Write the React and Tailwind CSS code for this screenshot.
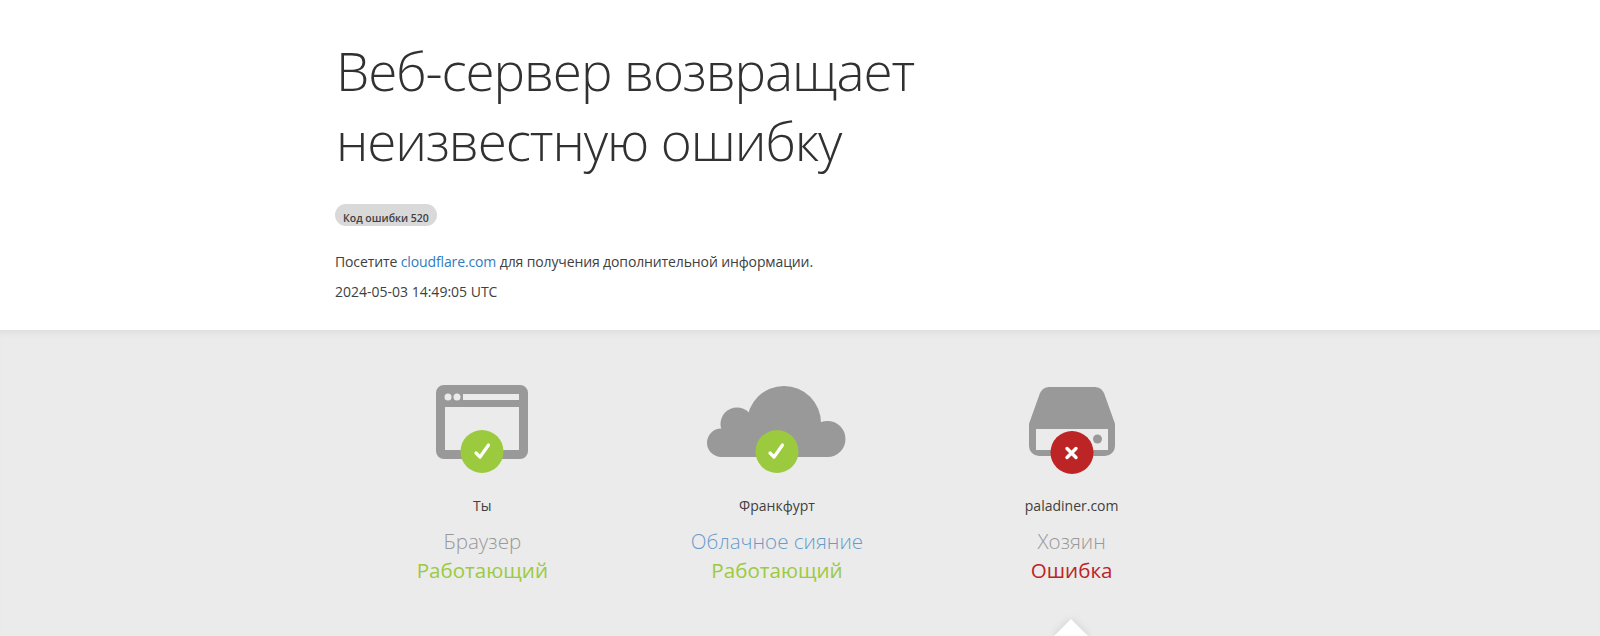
const font = { fontFamily: '"Open Sans", "Noto Sans", sans-serif' };

function Badge({ ok }) {
  return (
    <div className={`absolute bottom-0 left-1/2 -translate-x-1/2 w-[43px] h-[43px] rounded-full flex items-center justify-center ${ok ? "bg-[#9bca3e]" : "bg-[#bd2426]"}`}>
      {ok ? (
        <svg width="20" height="20" viewBox="0 0 20 20" fill="none" stroke="#fff" strokeWidth="3.2" strokeLinecap="round" strokeLinejoin="round">
          <path d="M3.5 11l4 4L16 3" />
        </svg>
      ) : (
        <svg width="14" height="14" viewBox="0 0 14 14" fill="none" stroke="#fff" strokeWidth="3.4" strokeLinecap="round">
          <path d="M2.5 2.5l9 9M11.5 2.5l-9 9" />
        </svg>
      )}
    </div>
  );
}

function BrowserIcon() {
  return (
    <svg width="92" height="74" viewBox="0 0 92 74">
      <path fillRule="evenodd" fill="#999" d="M8 0h76a8 8 0 0 1 8 8v58a8 8 0 0 1-8 8H8a8 8 0 0 1-8-8V8a8 8 0 0 1 8-8zM9 22v43h74V22z" />
      <circle cx="12" cy="12" r="3.5" fill="#ebebeb" />
      <circle cx="21" cy="12" r="3.5" fill="#ebebeb" />
      <rect x="27" y="9" width="56" height="6" fill="#ebebeb" />
    </svg>
  );
}

function CloudIcon() {
  return (
    <svg width="139" height="71" viewBox="0 0 139 71" fill="#999">
      <circle cx="77" cy="37" r="37" />
      <circle cx="30" cy="38" r="16.500" />
      <circle cx="14.200" cy="56.800" r="14.200" />
      <circle cx="120.500" cy="53" r="18" />
      <rect x="14" y="45" width="106" height="26" />
    </svg>
  );
}

function ServerIcon() {
  return (
    <svg width="86" height="69" viewBox="0 0 86 69">
      <path fillRule="evenodd" fill="#999" d="M20 0h46c4 0 7 2 9 6l10 28c1 2 1 3 1 5v20a10 10 0 0 1-10 10H10A10 10 0 0 1 0 59V39c0-2 0-3 1-5L11 6c2-4 5-6 9-6zM7 42v21h72V42z" />
      <circle cx="68.500" cy="52" r="4.500" fill="#999" />
    </svg>
  );
}

function StatusCol({ icon, box, gap, ok, place, label, labelClass, status }) {
  return (
    <div className="flex flex-col items-center">
      <div className={`relative flex justify-center items-start ${box}`}>
        {icon}
        <Badge ok={ok} />
      </div>
      <p className={`text-[14px] leading-5 text-[#404040] ${gap}`}>{place}</p>
      <p className={`text-[20.6px] leading-[29px] font-light mt-[11px] ${labelClass}`}>{label}</p>
      <p className={`text-[20.6px] leading-[29px] ${ok ? "text-[#9bca3e]" : "text-[#bd2426]"}`}>{status}</p>
    </div>
  );
}

export default function App() {
  return (
    <div className="h-[636px] bg-white flex flex-col overflow-hidden text-[#404040]" style={font}>
      {/* Header */}
      <div className="h-[330px] pl-[335px] pt-[36px] shrink-0">
        <h1 className="text-[53px] leading-[70px] tracking-[-1.1px] font-light text-[#313131] w-[700px] pl-px">Веб-сервер возвращает неизвестную ошибку</h1>
        <div className="mt-[28px] inline-block bg-[#d9d9d9] rounded-full h-[22px] px-[8px] pt-[6px] text-[10.500px] leading-[16px] font-semibold text-[#404040]">Код ошибки 520</div>
        <p className="text-[14px] tracking-[-0.12px] leading-5 mt-[24px]">
          Посетите <a href="#" className="text-[#2f7bbf]">cloudflare.com</a> для получения дополнительной информации.
        </p>
        <p className="text-[14px] leading-5 mt-[10px]">2024-05-03 14:49:05 UTC</p>
      </div>

      {/* Status */}
      <div className="relative flex-1 bg-[#ebebeb] pl-[335px] pt-[55px] overflow-hidden shadow-[inset_0_8px_8px_-6px_rgba(0,0,0,0.07)]">
        <div className="grid grid-cols-3 w-[884px]">
          <StatusCol icon={<BrowserIcon />} box="w-[92px] h-[88px]" gap="mt-[23px]" ok place="Ты" label="Браузер" labelClass="text-[#999]" status="Работающий" />
          <StatusCol icon={<CloudIcon />} box="w-[139px] h-[88px] pt-px" gap="mt-[23px]" ok place="Франкфурт" label="Облачное сияние" labelClass="text-[#2f7bbf] opacity-70" status="Работающий" />
          <StatusCol icon={<ServerIcon />} box="w-[86px] h-[89px] pt-[2px]" gap="mt-[22px]" ok={false} place="paladiner.com" label="Хозяин" labelClass="text-[#999]" status="Ошибка" />
        </div>
        <div className="absolute left-[1071px] bottom-[-12px] w-[24px] h-[24px] -translate-x-1/2 rotate-45 bg-white shadow-[0_0_8px_rgba(0,0,0,0.12)]"></div>
      </div>
    </div>
  );
}
